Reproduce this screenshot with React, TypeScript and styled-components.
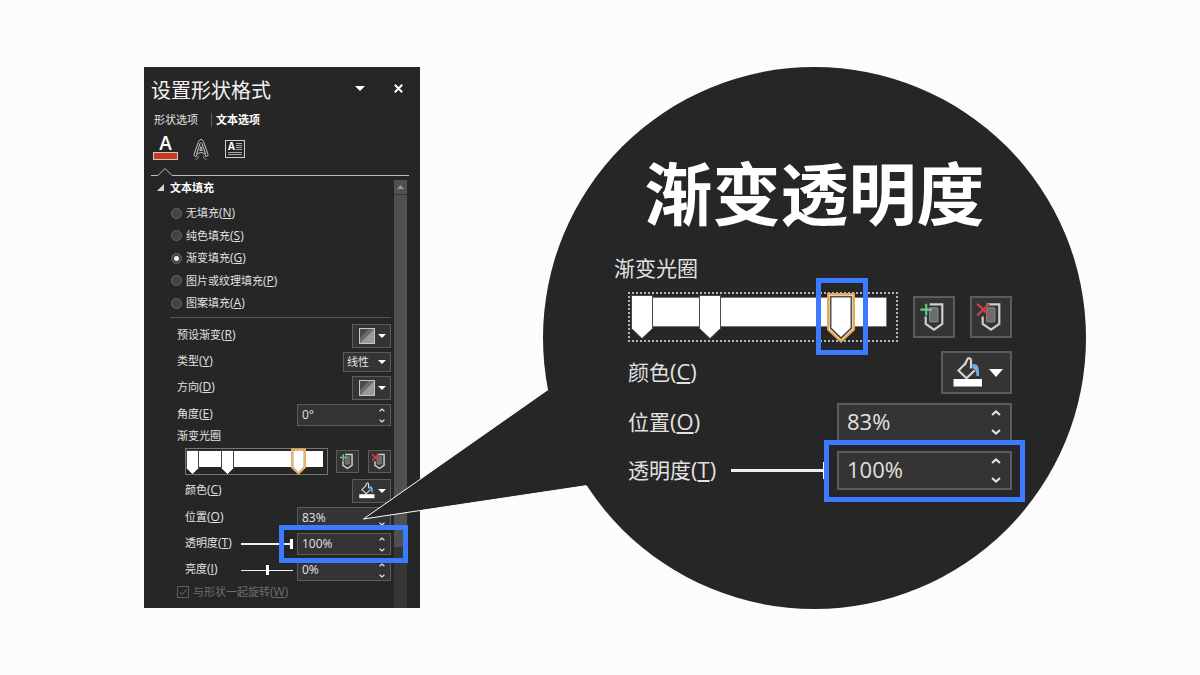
import React from 'react';
import styled, { createGlobalStyle, css } from 'styled-components';

const ink = '#262626';
const paper = '#fcfcfc';
const text = '#e2e2e2';
const field = '#343434';
const line = '#5c5c5c';
const blue = '#3b7bff';

type Size = 'small' | 'large';

const GlobalStyle = createGlobalStyle`
  * { box-sizing: border-box; }
  body {
    margin: 0;
    background: ${paper};
    color: ${text};
    font-family: "Open Sans", "Noto Sans CJK SC", sans-serif;
    font-size: 11px;
  }
  button, input, select { font: inherit; color: inherit; }
  button { padding: 0; border: 0; background: none; }
  h1, h2, h3 { margin: 0; font-weight: 400; }
  svg { display: block; overflow: visible; }
`;

const Page = styled.main`
  min-height: 100vh;
  display: flex;
  justify-content: center;
  align-items: flex-start;
  gap: 123px;
  padding: 67px 0 66px 30px;
`;

/* ---------- shared controls ---------- */

const Highlight = styled.span<{ $inset: string }>`
  position: absolute;
  inset: ${p => p.$inset};
  border: 5px solid ${blue};
  pointer-events: none;
  z-index: 2;
`;

const Row = styled.div<{ $h: number; $indent?: number; $size?: Size }>`
  display: flex;
  align-items: center;
  min-height: ${p => p.$h}px;
  padding-left: ${p => p.$indent ?? 0}px;
  white-space: nowrap;
  ${p => p.$size === 'large' && css`font-size: 21px;`}
`;

const Label = styled.label`
  flex: 1;
  padding-bottom: 2px;
  line-height: 1;
`;

const KeyText = styled.span<{ $size: Size }>`
  font-size: ${p => (p.$size === 'large' ? 22 : 12)}px;
  line-height: 1;
`;

function AccessKey({ k, size = 'small' }: { k: string; size?: Size }) {
  return <KeyText $size={size}>(<u>{k}</u>)</KeyText>;
}

const GroupLabel = styled.h3<{ $size: Size }>`
  font-size: ${p => (p.$size === 'large' ? 21 : 11)}px;
  line-height: ${p => (p.$size === 'large' ? 20 : 12)}px;
  height: ${p => (p.$size === 'large' ? 34 : 14)}px;
`;

const PickerButton = styled.button<{ $size: Size }>`
  display: flex;
  align-items: center;
  justify-content: space-between;
  border: 1px solid ${line};
  background: ${field};
  ${p =>
    p.$size === 'large'
      ? css`width: 71px; height: 43px; padding: 0 7px 0 10px; border-width: 2px;`
      : css`width: 39px; height: 24px; padding: 0 4px 0 6px;`}
`;

const IconButton = styled.button<{ $size: Size }>`
  flex: none;
  border: ${p => (p.$size === 'large' ? 2 : 1)}px solid ${line};
  background: ${field};
  width: ${p => (p.$size === 'large' ? 42 : 23)}px;
  height: ${p => (p.$size === 'large' ? 42 : 23)}px;
  svg { margin: ${p => (p.$size === 'large' ? -2 : -1)}px; }
`;

const SpinBox = styled.div<{ $size: Size }>`
  position: relative;
  display: flex;
  border: 1px solid ${line};
  background: ${field};
  ${p =>
    p.$size === 'large'
      ? css`width: 175px; height: 39px; border-width: 2px; font-size: 22px;`
      : css`width: 94px; height: 22px; font-size: 12px;`}
`;

const SpinInput = styled.input<{ $size: Size }>`
  flex: 1;
  min-width: 0;
  padding: ${p => (p.$size === 'large' ? '0 0 4px 8px' : '0 0 2px 4px')};
  border: 0;
  outline: 0;
  background: none;
`;

const SpinArrows = styled.div<{ $size: Size }>`
  display: flex;
  flex-direction: column;
  justify-content: space-between;
  padding: ${p => (p.$size === 'large' ? '5px 9px' : '3px 5px 2px')};
`;

const SpinArrow = styled.button`
  display: block;
`;

function Caret({ size }: { size: Size }) {
  const w = size === 'large' ? 14 : 8;
  const h = size === 'large' ? 8 : 4;
  return (
    <svg width={w} height={h} viewBox="0 0 14 8" preserveAspectRatio="none" aria-hidden="true">
      <path d="M0 0H14L7 8Z" fill="#fff" />
    </svg>
  );
}

function Chevron({ size, down }: { size: Size; down?: boolean }) {
  const w = size === 'large' ? 10 : 6;
  const h = size === 'large' ? 6 : 4;
  return (
    <svg width={w} height={h} viewBox="0 0 10 6" aria-hidden="true">
      <path d={down ? 'M1 1L5 4.6L9 1' : 'M1 5L5 1.4L9 5'} fill="none" stroke="#e4e4e4" strokeWidth="2" />
    </svg>
  );
}

interface SpinnerProps {
  id: string;
  value: string;
  size: Size;
  highlight?: string;
}

function Spinner({ id, value, size, highlight }: SpinnerProps) {
  return (
    <SpinBox $size={size}>
      <SpinInput id={id} defaultValue={value} $size={size} />
      <SpinArrows $size={size}>
        <SpinArrow aria-label="增加"><Chevron size={size} /></SpinArrow>
        <SpinArrow aria-label="减少"><Chevron size={size} down /></SpinArrow>
      </SpinArrows>
      {highlight && <Highlight $inset={highlight} />}
    </SpinBox>
  );
}

const Slider = styled.input<{ $w: number; $track: number; $thumb: number; $tall: number; $gap: number }>`
  appearance: none;
  width: ${p => p.$w}px;
  height: ${p => p.$tall}px;
  margin: 0 ${p => p.$gap}px 0 0;
  background: linear-gradient(#f0f0f0, #f0f0f0) center / 100% ${p => p.$track}px no-repeat;
  &::-webkit-slider-thumb {
    appearance: none;
    width: ${p => p.$thumb}px;
    height: ${p => p.$tall}px;
    background: #fff;
  }
`;

/* ---------- gradient stops ---------- */

const StopsFrame = styled.div<{ $size: Size }>`
  position: relative;
  ${p =>
    p.$size === 'large'
      ? css`width: 270px; height: 50px; border: 2px dotted #b4b4b4; padding: 3px 9px 0 2px; margin-right: 15px;`
      : css`width: 143px; height: 27px; border: 1px solid #747474; padding: 2px 4px 0 1px; margin-right: 8px;`}
`;

const StopsBar = styled.div<{ $size: Size }>`
  height: ${p => (p.$size === 'large' ? 30 : 16)}px;
  background: #fff;
  border: ${p => (p.$size === 'large' ? 1 : 0)}px solid #777;
`;

const Stop = styled.button<{ $left: number; $top: number }>`
  position: absolute;
  left: ${p => p.$left}px;
  top: ${p => p.$top}px;
`;

function StopShape({ size }: { size: Size }) {
  return size === 'large' ? (
    <svg width="22" height="44" viewBox="0 0 22 44" aria-hidden="true">
      <path d="M.5 .5H21.5V33.5L11 43.5L.5 33.5Z" fill="#fff" stroke="#4a4a4a" />
    </svg>
  ) : (
    <svg width="13" height="25" viewBox="0 0 13 25" aria-hidden="true">
      <path d="M.5 .5H12.5V18.5L6.5 24.5L.5 18.5Z" fill="#fff" stroke="#444" />
    </svg>
  );
}

function SelectedStopShape({ size }: { size: Size }) {
  return size === 'large' ? (
    <svg width="28" height="50" viewBox="0 0 28 50" aria-hidden="true">
      <path d="M1 1H27V36.5L14 48.6L1 36.5Z" fill="#fff" stroke="#f2a742" strokeWidth="2" />
      <path d="M3.6 3.6H24.4V35.2L14 45.2L3.6 35.2Z" fill="#fff" stroke="#505050" strokeWidth="1.8" />
    </svg>
  ) : (
    <svg width="15" height="27" viewBox="0 0 15 27" aria-hidden="true">
      <path d="M.7 1H14.3V19.5L7.5 26L.7 19.5Z" fill="#fff" stroke="#f2a742" strokeWidth="1.3" />
      <path d="M2 2.2H13V19L7.5 24.3L2 19Z" fill="#fff" stroke="#8a745a" strokeWidth=".7" />
    </svg>
  );
}

function GradientStops({ size, highlight }: { size: Size; highlight?: string }) {
  const [first, second, third] = size === 'large' ? [1, 69, 197] : [0, 35, 105];
  return (
    <StopsFrame $size={size}>
      <StopsBar $size={size} />
      <Stop $left={first} $top={1} aria-label="光圈 1"><StopShape size={size} /></Stop>
      <Stop $left={second} $top={1} aria-label="光圈 2"><StopShape size={size} /></Stop>
      <Stop $left={third} $top={-1} aria-label="光圈 3"><SelectedStopShape size={size} /></Stop>
      {highlight && <Highlight $inset={highlight} />}
    </StopsFrame>
  );
}

function StopIcon({ kind, size }: { kind: 'add' | 'remove'; size: Size }) {
  const side = size === 'large' ? 42 : 23;
  const weight = size === 'large' ? 2.2 : 2.8;
  return (
    <svg width={side} height={side} viewBox="0 0 43 42" aria-hidden="true">
      <rect x="17" y="11.5" width="8.5" height="14.5" rx="1" fill="#6c6c6c" stroke="#8e8e8e" />
      <path d="M17 8H30V28L21.5 34L13 28V20.5" fill="none" stroke="#cfcfcf" strokeWidth={weight} />
      {kind === 'add' ? (
        <path d="M7.500 13.500H19.500M13.500 7.500V19.500" stroke="#5fce80" strokeWidth={weight} />
      ) : (
        <path d="M7.500 7.500L19.500 19.500M19.500 7.500L7.500 19.500" stroke="#cf4247" strokeWidth={weight} />
      )}
    </svg>
  );
}

function BucketIcon({ size }: { size: Size }) {
  const side = size === 'large' ? 30 : 16;
  return (
    <svg width={side} height={side} viewBox="12 7 30 30" aria-hidden="true">
      <path d="M24.500 12.500L17.500 19.500L25.500 27.200L33.500 19.500" fill="none" stroke="#d4d4d4" strokeWidth="2.200" />
      <path d="M23.800 14L26.200 8.400C27 6.600 30 6.800 30 9.200V17.500" fill="none" stroke="#d4d4d4" strokeWidth="2.200" />
      <path d="M31.500 13C36.500 12.500 38.500 15 38 25L35.500 25C35.500 21 34.500 19 31.500 17Z" fill="#71b0e4" />
      <rect x="12.500" y="28" width="28.500" height="7.500" fill="#fff" />
    </svg>
  );
}

function GradientSwatch() {
  return (
    <svg width="16" height="16" viewBox="0 0 16 16" aria-hidden="true">
      <rect x=".5" y=".5" width="15" height="15" fill="#4a4a4a" stroke="#c6c6c6" />
      <path d="M15 1V15H1Z" fill="#9a9a9a" />
      <path d="M10 1H15L1 15V10Z" fill="#6c6c6c" />
    </svg>
  );
}

/* ---------- format pane ---------- */

const Pane = styled.section`
  flex: 0 0 276px;
  background: ${ink};
`;

const PaneHeader = styled.header`
  display: flex;
  align-items: center;
  height: 46px;
  padding: 0 17px 4px 7px;
`;

const PaneTitle = styled.h1`
  flex: 1;
  font-size: 20px;
  line-height: 24px;
  padding-top: 5px;
  color: #f2f2f2;
`;

const HeaderButton = styled.button`
  display: grid;
  place-items: center;
  width: 10px;
  height: 12px;
  margin-left: 28px;
`;

const Tabs = styled.nav`
  display: flex;
  height: 14px;
  padding-left: 10px;
`;

const Tab = styled.button<{ $active?: boolean }>`
  line-height: 14px;
  ${p =>
    p.$active
      ? css`font-weight: 700; color: #fff; padding-left: 4px; border-left: 1px solid #5c5c5c;`
      : css`padding-right: 13px;`}
`;

const Modes = styled.div`
  display: flex;
  align-items: center;
  gap: 16px;
  padding: 11px 0 0 10px;
`;

const FillMode = styled.button`
  display: flex;
  flex-direction: column;
  justify-content: flex-end;
  align-items: center;
  width: 23px;
  height: 22px;
  font-size: 19px;
  font-weight: 600;
  line-height: 18px;
  color: #fff;
  &::after {
    content: "";
    width: 23px;
    height: 6px;
    flex: none;
    border: 1px solid #d8c4be;
    background: #c43e1c;
  }
`;

const ModeDivider = styled.div`
  display: flex;
  align-items: flex-end;
  padding: 7px 11px 0 7px;
  &::after { content: ""; flex: 1; border-bottom: 1px solid #bdbdbd; }
`;

const PaneBody = styled.div`
  display: flex;
  padding: 4px 13px 0 7px;
`;

const Options = styled.div`
  flex: 1;
  padding: 0 3px 10px 6px;
`;

const SectionTitle = styled.h2`
  display: flex;
  align-items: center;
  gap: 6px;
  height: 14px;
  margin-bottom: 10px;
  font-size: 11px;
  font-weight: 700;
  color: #fff;
`;

const FillKinds = styled.fieldset`
  display: flex;
  flex-direction: column;
  justify-content: space-between;
  height: 108px;
  margin: 0 0 5px 14px;
  padding: 0;
  border: 0;
`;

const Choice = styled.label`
  display: flex;
  align-items: center;
  gap: 4px;
  height: 18px;
  line-height: 18px;
`;

const Radio = styled.input`
  appearance: none;
  width: 11px;
  height: 11px;
  margin: 0;
  border: 1px solid #676767;
  border-radius: 50%;
  background: #434343;
  &:checked { background: radial-gradient(circle, #f0f0f0 0 2px, #434343 3px); }
`;

const Settings = styled.div`
  display: flex;
  flex-direction: column;
  gap: 4px;
  margin-left: 13px;
  padding: 6px 0 0 7px;
  border-top: 1px solid #555;
`;

const SelectBox = styled.span`
  display: grid;
  align-items: center;
  width: 48px;
  height: 20px;
  border: 1px solid ${line};
  background: ${field};
  > * { grid-area: 1 / 1; }
  > svg { justify-self: end; margin-right: 4px; pointer-events: none; }
`;

const Select = styled.select`
  appearance: none;
  width: 100%;
  height: 18px;
  padding: 0 0 2px 3px;
  border: 0;
  background: none;
`;

const CheckLabel = styled.label`
  display: flex;
  align-items: center;
  gap: 4px;
  height: 13px;
  line-height: 13px;
  color: #6e6e6e;
`;

const Check = styled.input`
  appearance: none;
  width: 12px;
  height: 12px;
  margin: 0;
  border: 1px solid #5e5e5e;
`;

const CheckBox = styled.span`
  display: grid;
  > * { grid-area: 1 / 1; }
`;

const Scrollbar = styled.div`
  display: flex;
  flex-direction: column;
  width: 13px;
  background: #363636;
`;

const ScrollUp = styled.button`
  display: grid;
  place-items: center;
  height: 14px;
  margin-bottom: 1px;
  background: #505050;
`;

const ScrollThumb = styled.div`
  height: 352px;
  background: #505050;
`;

function FormatPane() {
  const kinds: [string, string][] = [
    ['无填充', 'N'], ['纯色填充', 'S'], ['渐变填充', 'G'], ['图片或纹理填充', 'P'], ['图案填充', 'A'],
  ];
  return (
    <Pane>
      <PaneHeader>
        <PaneTitle>设置形状格式</PaneTitle>
        <HeaderButton aria-label="选项">
          <svg width="10" height="5" viewBox="0 0 10 5"><path d="M0 0H10L5 5Z" fill="#fff" /></svg>
        </HeaderButton>
        <HeaderButton aria-label="关闭">
          <svg width="9" height="9" viewBox="0 0 9 9">
            <path d="M.8 .8L8.200 8.200M8.200 .8L.8 8.200" stroke="#fff" strokeWidth="2" />
          </svg>
        </HeaderButton>
      </PaneHeader>
      <Tabs>
        <Tab>形状选项</Tab>
        <Tab $active>文本选项</Tab>
      </Tabs>
      <Modes>
        <FillMode aria-label="文本填充与轮廓">A</FillMode>
        <button aria-label="文字效果">
          <svg width="16" height="22" viewBox="0 0 16 22">
            <g fill="none" stroke="#c4c4c4" strokeLinejoin="round">
              <path d="M1 16.500L5.500 3.500Q8 -.5 10.500 3.500L15 16.500" />
              <path d="M3.500 16L7 5.500Q8 3.500 9 5.500L12.500 16" />
              <path d="M8 8.500L6.700 12.500H9.300Z" />
              <path d="M1 16.500Q.8 18.500 3 18.500L4.500 15.500Q8 13.500 11.500 15.500L13 18.500Q15.200 18.500 15 16.500" />
              <path d="M2.500 21.500Q5.500 21.500 5.500 17.500M13.500 21.500Q10.500 21.500 10.500 17.500" stroke="#8c8c8c" />
            </g>
          </svg>
        </button>
        <button aria-label="文本框">
          <svg width="20" height="18" viewBox="0 0 20 18">
            <rect x=".5" y=".5" width="19" height="17" fill="none" stroke="#d0d0d0" />
            <text x="3" y="10" fontFamily="Open Sans" fontWeight="700" fontSize="10" fill="#fff">A</text>
            <path d="M11 3.500H17M11 5.500H17M11 7.500H17M11 9.500H17M3 12.500H17M3 14.500H17" stroke="#a8a8a8" />
          </svg>
        </button>
      </Modes>
      <ModeDivider>
        <svg width="21" height="9" viewBox="0 0 21 9">
          <path d="M0 8.500H7L14 1.500L21 8.500" fill="none" stroke="#bdbdbd" />
        </svg>
      </ModeDivider>
      <PaneBody>
        <Options>
          <SectionTitle>
            <svg width="7" height="7" viewBox="0 0 7 7"><path d="M7 0V7H0Z" fill="#d6d6d6" /></svg>
            文本填充
          </SectionTitle>
          <FillKinds>
            {kinds.map(([name, key]) => (
              <Choice key={key}>
                <Radio type="radio" name="fill" defaultChecked={key === 'G'} />
                <span>{name}<AccessKey k={key} /></span>
              </Choice>
            ))}
          </FillKinds>
          <Settings>
            <Row $h={24}>
              <Label htmlFor="preset">预设渐变<AccessKey k="R" /></Label>
              <PickerButton id="preset" $size="small"><GradientSwatch /><Caret size="small" /></PickerButton>
            </Row>
            <Row $h={20}>
              <Label htmlFor="type">类型<AccessKey k="Y" /></Label>
              <SelectBox>
                <Select id="type"><option>线性</option></Select>
                <Caret size="small" />
              </SelectBox>
            </Row>
            <Row $h={24}>
              <Label htmlFor="direction">方向<AccessKey k="D" /></Label>
              <PickerButton id="direction" $size="small"><GradientSwatch /><Caret size="small" /></PickerButton>
            </Row>
            <Row $h={22}>
              <Label htmlFor="angle">角度<AccessKey k="E" /></Label>
              <Spinner id="angle" value="0°" size="small" />
            </Row>
            <GroupLabel $size="small">渐变光圈</GroupLabel>
            <Row $h={27} $indent={8}>
              <GradientStops size="small" />
              <IconButton $size="small" aria-label="添加渐变光圈"><StopIcon kind="add" size="small" /></IconButton>
              <Label as="span" />
              <IconButton $size="small" aria-label="删除渐变光圈"><StopIcon kind="remove" size="small" /></IconButton>
            </Row>
            <Row $h={24} $indent={8}>
              <Label htmlFor="color">颜色<AccessKey k="C" /></Label>
              <PickerButton id="color" $size="small"><BucketIcon size="small" /><Caret size="small" /></PickerButton>
            </Row>
            <Row $h={22} $indent={8}>
              <Label htmlFor="position">位置<AccessKey k="O" /></Label>
              <Spinner id="position" value="83%" size="small" />
            </Row>
            <Row $h={22} $indent={8}>
              <Label htmlFor="alpha">透明度<AccessKey k="T" /></Label>
              <Slider type="range" aria-label="透明度" defaultValue={100} $w={52} $track={2} $thumb={3} $tall={10} $gap={4} />
              <Spinner id="alpha" value="100%" size="small" highlight="-9px -18px -9px -19px" />
            </Row>
            <Row $h={22} $indent={8}>
              <Label htmlFor="bright">亮度<AccessKey k="I" /></Label>
              <Slider type="range" aria-label="亮度" defaultValue={50} $w={52} $track={1} $thumb={3} $tall={10} $gap={4} />
              <Spinner id="bright" value="0%" size="small" />
            </Row>
            <CheckLabel>
              <CheckBox>
                <Check type="checkbox" defaultChecked disabled />
                <svg width="12" height="12" viewBox="0 0 12 12">
                  <path d="M3 6L5.200 8.500L9.500 3.500" fill="none" stroke="#6e6e6e" />
                </svg>
              </CheckBox>
              <span>与形状一起旋转<AccessKey k="W" /></span>
            </CheckLabel>
          </Settings>
        </Options>
        <Scrollbar>
          <ScrollUp aria-label="向上滚动">
            <svg width="7" height="4" viewBox="0 0 7 4"><path d="M3.500 0L7 4H0Z" fill="#999" /></svg>
          </ScrollUp>
          <ScrollThumb />
        </Scrollbar>
      </PaneBody>
    </Pane>
  );
}

/* ---------- magnified callout ---------- */

const Lens = styled.section`
  position: relative;
  flex: 0 0 543px;
  aspect-ratio: 543 / 542;
  padding: 93px 74px 0 85px;
  border-radius: 50%;
  background: ${ink};
`;

const Pointer = styled.svg`
  position: absolute;
  left: -181px;
  top: 315px;
`;

const LensTitle = styled.h2`
  margin: 0 -74px 30px -85px;
  font-size: 68px;
  font-weight: 700;
  line-height: 68px;
  text-align: center;
  color: #fff;
`;

const LensGroup = styled.div`
  position: relative;
  margin-left: -14px;
`;

const LensRows = styled.div`
  position: relative;
  display: flex;
  flex-direction: column;
  gap: 9px;
`;

function Magnified() {
  return (
    <Lens>
      <Pointer width="230" height="145" viewBox="0 0 230 145" aria-hidden="true">
        <path d="M185.500 8L1.500 137L225 103.500L229 60Z" fill={ink} />
        <path d="M185.500 8L1.500 137L224 103.700" fill="none" stroke={paper} />
      </Pointer>
      <LensTitle>渐变透明度</LensTitle>
      <LensGroup><GroupLabel $size="large">渐变光圈</GroupLabel></LensGroup>
      <LensRows>
        <Row $h={50} $size="large">
          <GradientStops size="large" highlight="-16px 28px -15px 186px" />
          <IconButton $size="large" aria-label="添加渐变光圈"><StopIcon kind="add" size="large" /></IconButton>
          <Label as="span" />
          <IconButton $size="large" aria-label="删除渐变光圈"><StopIcon kind="remove" size="large" /></IconButton>
        </Row>
        <Row $h={43} $size="large">
          <Label htmlFor="lens-color">颜色<AccessKey k="C" size="large" /></Label>
          <PickerButton id="lens-color" $size="large"><BucketIcon size="large" /><Caret size="large" /></PickerButton>
        </Row>
        <Row $h={39} $size="large">
          <Label htmlFor="lens-position">位置<AccessKey k="O" size="large" /></Label>
          <Spinner id="lens-position" value="83%" size="large" />
        </Row>
        <Row $h={39} $size="large">
          <Label htmlFor="lens-alpha">透明度<AccessKey k="T" size="large" /></Label>
          <Slider type="range" aria-label="透明度" defaultValue={100} $w={97} $track={3} $thumb={5} $tall={17} $gap={9} />
          <Spinner id="lens-alpha" value="100%" size="large" highlight="-13px -15px -14px -15px" />
        </Row>
      </LensRows>
    </Lens>
  );
}

export default function App() {
  return (
    <>
      <GlobalStyle />
      <Page>
        <FormatPane />
        <Magnified />
      </Page>
    </>
  );
}
